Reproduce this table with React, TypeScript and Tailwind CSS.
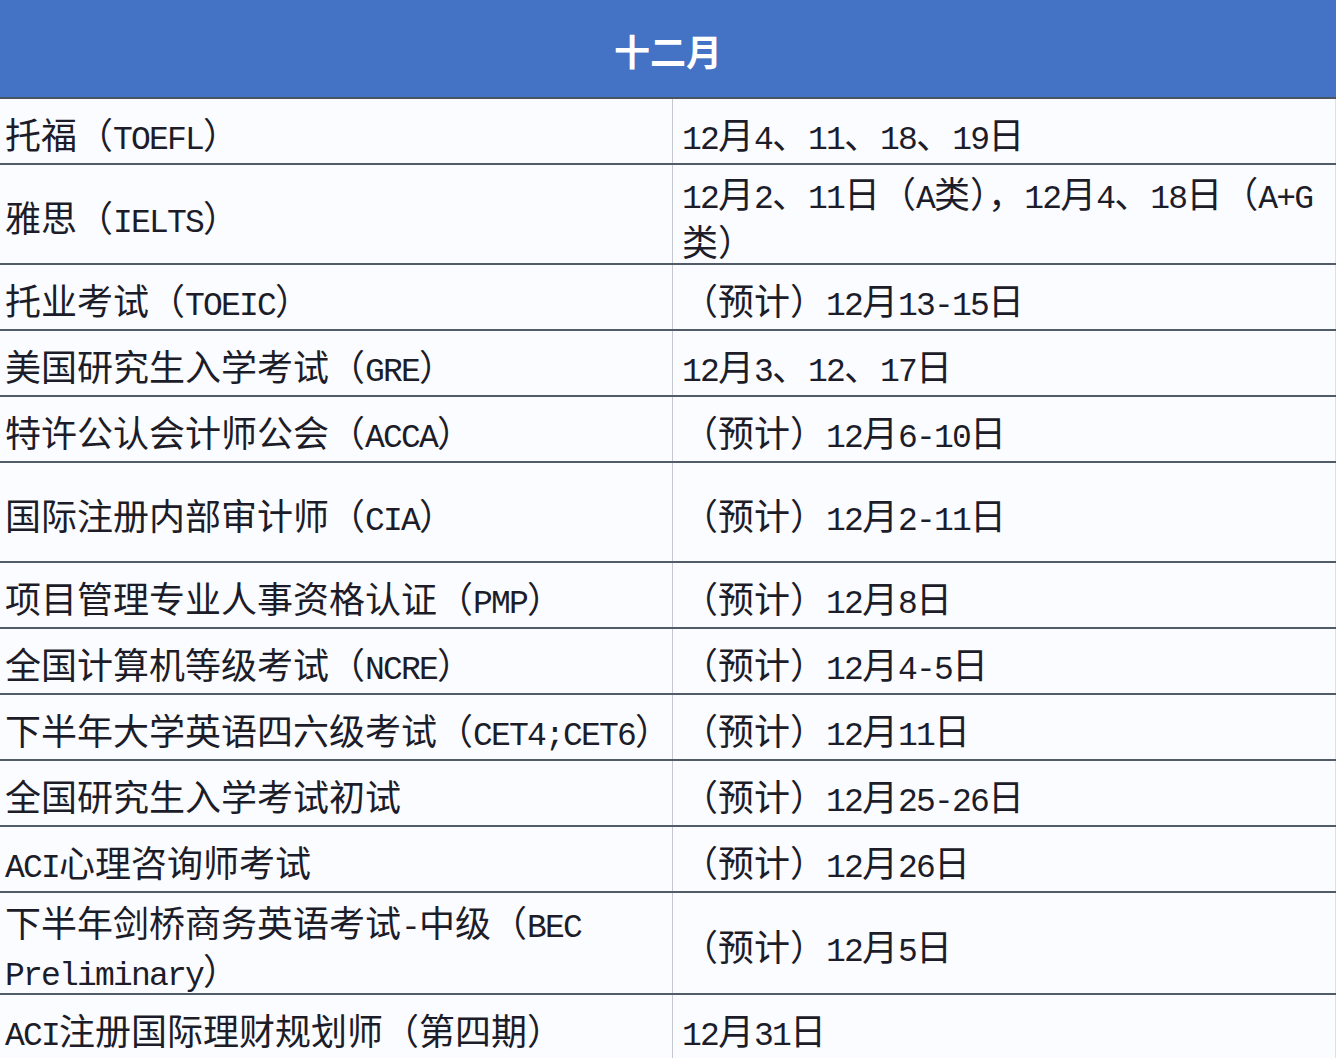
interface ExamRow {
  name: string;
  date: string;
  h: string;
}

const rows: ExamRow[] = [
  { name: "托福（TOEFL）", date: "12月4、11、18、19日", h: "h-[66px]" },
  { name: "雅思（IELTS）", date: "12月2、11日（A类），12月4、18日（A+G类）", h: "h-[100px]" },
  { name: "托业考试（TOEIC）", date: "（预计）12月13-15日", h: "h-[66px]" },
  { name: "美国研究生入学考试（GRE）", date: "12月3、12、17日", h: "h-[66px]" },
  { name: "特许公认会计师公会（ACCA）", date: "（预计）12月6-10日", h: "h-[66px]" },
  { name: "国际注册内部审计师（CIA）", date: "（预计）12月2-11日", h: "h-[100px]" },
  { name: "项目管理专业人事资格认证（PMP）", date: "（预计）12月8日", h: "h-[66px]" },
  { name: "全国计算机等级考试（NCRE）", date: "（预计）12月4-5日", h: "h-[66px]" },
  { name: "下半年大学英语四六级考试（CET4;CET6）", date: "（预计）12月11日", h: "h-[66px]" },
  { name: "全国研究生入学考试初试", date: "（预计）12月25-26日", h: "h-[66px]" },
  { name: "ACI心理咨询师考试", date: "（预计）12月26日", h: "h-[66px]" },
  { name: "下半年剑桥商务英语考试-中级（BEC Preliminary）", date: "（预计）12月5日", h: "h-[102px]" },
  { name: "ACI注册国际理财规划师（第四期）", date: "12月31日", h: "h-[66px]" },
];

// half-width latin runs: mono face, squeezed so each char is half a CJK cell
const Mixed = ({ text }: { text: string }) => {
  const parts = text.split(/([\x20-\x7e]+)/).filter((p) => p !== "");
  return (
    <>
      {parts.map((p, i) =>
        /^[\x20-\x7e]+$/.test(p) ? (
          <span
            key={i}
            className="font-['Liberation_Mono',monospace] text-[33px] leading-[33px] tracking-[-1.8px]"
          >
            {p}
          </span>
        ) : (
          <span key={i}>{p}</span>
        ),
      )}
    </>
  );
};

export default function App() {
  return (
    <div className="w-[1336px] bg-[#fbfcff] font-['Noto_Sans_CJK_SC',sans-serif] text-[36px] leading-[48px] text-[#1d1d29]">
      <div className="flex h-[99px] items-center justify-center border-b-2 border-[#4a5562] bg-[#4472c4] pt-[2px]">
        <span className="font-bold text-white">十二月</span>
      </div>
      {rows.map((r, i) => (
        <div key={i} className={`flex ${r.h} border-b-2 border-[#525c68]`}>
          <div className="flex w-[673px] shrink-0 items-center border-r border-[#c3c7cf] pl-[5px]">
            <div className="pt-[4px]">
              <Mixed text={r.name} />
            </div>
          </div>
          <div className="flex flex-1 items-center border-r border-[#dde0e6] pl-[9px]">
            <div className="pt-[4px]">
              <Mixed text={r.date} />
            </div>
          </div>
        </div>
      ))}
    </div>
  );
}
